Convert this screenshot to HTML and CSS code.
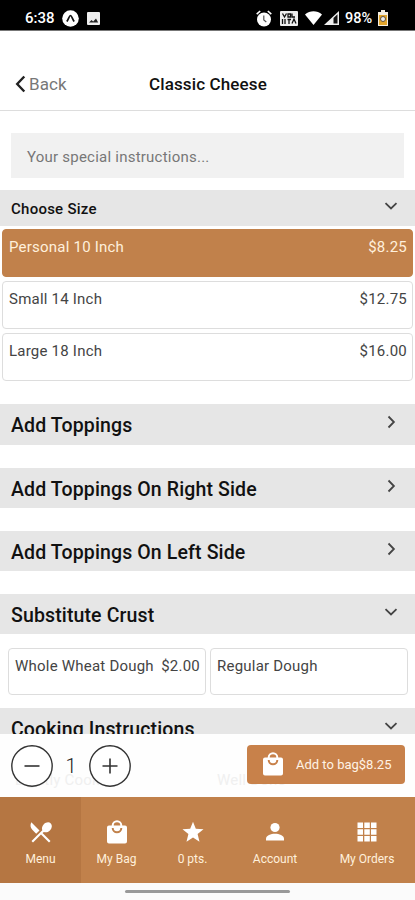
FILE: index.html
```html
<!DOCTYPE html>
<html lang="en">
<head>
<meta charset="utf-8">
<meta name="viewport" content="width=device-width, initial-scale=1">
<title>Classic Cheese</title>
<link rel="stylesheet" href="styles.css">
</head>
<body>
<svg class="defs" width="0" height="0">
  <symbol id="down" viewBox="0 0 14 14"><path d="M1.500 4.200 7 9.500l5.500-5.300" fill="none" stroke="#444" stroke-width="1.800"/></symbol>
  <symbol id="right" viewBox="0 0 14 14"><path d="M4.500 1.500 9.900 7l-5.400 5.500" fill="none" stroke="#444" stroke-width="1.800"/></symbol>
  <symbol id="bag" viewBox="0 0 22 24"><path d="M3 5.500h2.700a5.300 5.300 0 0 1 10.600 0H19a2 2 0 0 1 2 2V21.500a2 2 0 0 1-2 2H3a2 2 0 0 1-2-2V7.500a2 2 0 0 1 2-2zm4.700 0h6.600a3.300 3.300 0 0 0-6.600 0zM5.700 8a5.300 5.300 0 0 0 10.600 0h-2a3.300 3.300 0 0 1-6.600 0z" fill="#fff" fill-rule="evenodd"/></symbol>
</svg>
<div class="phone">
  <div class="status">
    <span class="time">6:38</span>
    <svg class="s-app" width="17" height="17" viewBox="0 0 17 17"><circle cx="8.500" cy="8.500" r="8.300" fill="#fff"/><path d="M4.800 11.500C6.500 9.500 7.300 5.500 8.500 5.500s2 4 3.700 6" fill="none" stroke="#111" stroke-width="1.700"/></svg>
    <svg class="s-pic" width="13" height="13" viewBox="0 0 13 13"><rect width="13" height="13" rx="1" fill="#eee"/><path d="M2 10.500 4.500 8l1.700 1.500L9 6.500l2.200 4z" fill="#222"/></svg>
    <span class="grow"></span>
    <svg class="s-alarm" width="16" height="17" viewBox="0 0 16 17"><circle cx="8" cy="9.500" r="7" fill="#fff"/><path d="M.7 4.200 4.200 1M15.300 4.200 11.800 1" stroke="#fff" stroke-width="1.600"/><path d="M7.800 5.500v4.500l2.500 2" fill="none" stroke="#555" stroke-width="1.200"/></svg>
    <svg class="s-volte" width="18" height="15" viewBox="0 0 18 15"><rect width="18" height="15" rx="1" fill="#eee"/><path d="M2.500 2.500 4.500 6l2-3.500M8 3v3h2.500V3zM12 2.500V6h3M2.500 8v5M5 8v5M7.500 8.500H11M9 8.500V13M12 12.500l2-4.500 2 4.500" fill="none" stroke="#111" stroke-width="1.300"/></svg>
    <svg class="s-wifi" width="17" height="14" viewBox="0 0 17 14"><path d="M0 3.500C5-.9 12-.9 17 3.500L8.500 14z" fill="#fff"/></svg>
    <svg class="s-cell" width="15" height="14" viewBox="0 0 15 14"><path d="M0 14 15 0v14z" fill="#eee"/><path d="M9.500 7v5.500h4V3.300z" fill="#111"/></svg>
    <span class="pct">98%</span>
    <svg class="s-batt" width="10" height="16" viewBox="0 0 10 16"><path d="M3 0h4v2h3v14H0V2h3z" fill="#f5eee0"/><path d="M1 5h8v10H1z" fill="#e3a52b"/><circle cx="5" cy="9" r="2.500" fill="#eee" stroke="#625039"/></svg>
  </div>
  <header class="header">
    <div class="back"><svg width="11" height="18" viewBox="0 0 11 18"><path d="M9.300 1.500 2.200 9l7.100 7.500" fill="none" stroke="#222" stroke-width="2.400"/></svg><span>Back</span></div>
    <h1>Classic Cheese</h1>
  </header>
  <main class="content">
    <div class="note"><span>Your special instructions...</span></div>
    <div class="bar bar-size"><span>Choose Size</span><svg class="chev"><use href="#down"/></svg></div>
    <div class="sizes">
      <div class="option selected"><span>Personal 10 Inch</span><span class="price">$8.25</span></div>
      <div class="option"><span>Small 14 Inch</span><span class="price">$12.75</span></div>
      <div class="option"><span>Large 18 Inch</span><span class="price">$16.00</span></div>
    </div>
    <div class="bar"><span>Add Toppings</span><svg class="chev"><use href="#right"/></svg></div>
    <div class="bar"><span>Add Toppings On Right Side</span><svg class="chev"><use href="#right"/></svg></div>
    <div class="bar"><span>Add Toppings On Left Side</span><svg class="chev"><use href="#right"/></svg></div>
    <div class="bar crust-bar"><span>Substitute Crust</span><svg class="chev"><use href="#down"/></svg></div>
    <div class="crusts">
      <div class="option"><span>Whole Wheat Dough</span><span class="price">$2.00</span></div>
      <div class="option"><span>Regular Dough</span></div>
    </div>
    <div class="bar"><span>Cooking Instructions</span><svg class="chev"><use href="#down"/></svg></div>
  </main>
  <div class="order">
    <div class="under"><span>Lightly Cooked</span><span>Well Done</span></div>
    <div class="qty">
      <svg width="42" height="42" viewBox="0 0 42 42"><circle cx="21" cy="21" r="20.200" fill="#fff" stroke="#333" stroke-width="1.400"/><path d="M13.500 21h15" stroke="#333" stroke-width="1.600"/></svg>
      <span class="count">1</span>
      <svg width="42" height="42" viewBox="0 0 42 42"><circle cx="21" cy="21" r="20.200" fill="#fff" stroke="#333" stroke-width="1.400"/><path d="M13.500 21h15M21 13.500v15" stroke="#333" stroke-width="1.600"/></svg>
    </div>
    <div class="add"><svg width="22" height="24"><use href="#bag"/></svg><span>Add to bag$8.25</span></div>
  </div>
  <nav class="nav">
    <div class="tab active"><svg width="24" height="24" viewBox="0 0 24 24"><path d="M2.300 2.300C1 5 1.300 7.800 3.300 9.800l3.900 3.900 3.300-3.300zM14.900 11.900c1.900.8 4.300.2 6-1.500 2.200-2.200 2.600-5.300.9-7s-4.800-1.300-7 .9c-1.700 1.700-2.300 4.100-1.500 6L2.500 21.100 4 22.600l8-8 8 8 1.500-1.500-8-8z" fill="#fff"/></svg><span>Menu</span></div>
    <div class="tab"><svg width="22" height="24"><use href="#bag"/></svg><span>My Bag</span></div>
    <div class="tab"><svg width="24" height="24" viewBox="0 0 24 24"><path d="m12 1.700 2.800 7.100 7.700.5-5.900 4.800 1.900 7.600-6.500-4.200-6.500 4.200 1.900-7.600L1.500 9.300l7.700-.5z" fill="#fff"/></svg><span>0 pts.</span></div>
    <div class="tab"><svg width="24" height="24" viewBox="0 0 24 24"><circle cx="12" cy="7.500" r="4.600" fill="#fff"/><path d="M3 20.500v-1.800c0-3.200 5-5 9-5s9 1.800 9 5v1.800z" fill="#fff"/></svg><span>Account</span></div>
    <div class="tab"><svg width="24" height="24" viewBox="0 0 24 24"><path d="M2.500 2.500H8V8H2.500zM9.300 2.500h5.500V8H9.300zM16 2.500h5.500V8H16zM2.500 9.300H8v5.500H2.500zM9.300 9.300h5.500v5.500H9.300zM16 9.300h5.500v5.500H16zM2.500 16H8v5.500H2.500zM9.300 16h5.500v5.500H9.300zM16 16h5.500v5.500H16z" fill="#fff"/></svg><span>My Orders</span></div>
  </nav>
  <div class="gesture"><i></i></div>
</div>
</body>
</html>
```
FILE: styles.css
```css
* { box-sizing: border-box; }
body { margin: 0; background: #fff; font-family: Roboto, sans-serif; color: #111; }
.defs { position: absolute; }
svg { display: block; flex: none; }
.phone { width: 415px; height: 900px; display: flex; flex-direction: column; overflow: hidden; }
.status { height: 31px; flex: none; background: #000; border-bottom: 1px solid #777; color: #fff; display: flex; align-items: center; padding: 6px 27px 0 25px; font-size: 15px; font-weight: 500; }
.status svg { margin-left: 8px; }
.time { width: 29px; }
.grow { flex: 1; }
.status .s-wifi { margin-left: 7px; }
.status .s-cell { margin-left: 2px; }
.pct { margin-left: 6px; width: 29px; font-size: 14.5px; }
.status .s-batt { margin-left: 4px; }
.header { height: 80px; flex: none; border-bottom: 1px solid #ddd; display: grid; grid-template-columns: 134px 1fr; align-items: center; padding: 27px 0 0 15px; }
.back { display: flex; align-items: center; gap: 3px; font-size: 17px; color: #777; letter-spacing: .1px; }
h1 { margin: 0; font-size: 17px; font-weight: 500; letter-spacing: .13px; line-height: 23px; }
.content { height: 623px; flex: none; overflow: hidden; }
.note { margin: 22px 11px 12px; height: 45px; background: #f1f1f1; display: flex; align-items: center; padding: 2px 16px 0; color: #777; font-size: 15px; letter-spacing: .23px; }
.bar { height: 40px; margin-bottom: 23px; background: #e6e6e6; display: flex; justify-content: space-between; align-items: center; padding: 2px 17px 0 11px; font-size: 19.5px; font-weight: 500; letter-spacing: .13px; }
.chev { width: 14px; height: 14px; margin-top: -7px; }
.bar-size { height: 36px; margin-bottom: 3px; font-size: 15px; letter-spacing: .25px; }
.sizes { padding: 0 2px; display: grid; gap: 4px; margin-bottom: 24px; }
.option { height: 48px; border: 1px solid #ddd; border-radius: 4px; padding: 8px 5px 0 6px; display: flex; justify-content: space-between; font-size: 15px; line-height: 19px; letter-spacing: .22px; color: #444; white-space: nowrap; }
.selected { background: #c1814b; border-color: #c1814b; color: #fff0dc; }
.crust-bar { margin-bottom: 14px; }
.crusts { display: grid; grid-template-columns: 198px 198px; gap: 4px; padding-left: 8px; margin-bottom: 13px; }
.crusts .option { height: 47px; line-height: 18px; }
.sizes + .bar { margin-top: -1px; height: 41px; }
.order { height: 63px; flex: none; background: #fefefe; position: relative; display: flex; justify-content: space-between; align-items: flex-start; padding: 11px 10px 0 11px; }
.under { position: absolute; left: 15px; top: 37px; display: grid; grid-template-columns: 202px 1fr; font-size: 15px; letter-spacing: .22px; color: #f0f0f0; }
.qty, .add { position: relative; }
.qty { display: flex; align-items: center; }
.count { width: 36px; text-align: center; font-size: 20px; font-weight: 300; color: #222; }
.add { width: 158px; height: 39px; background: #c8814a; border-radius: 4px; display: flex; align-items: center; padding-left: 15px; gap: 12px; color: #fff3e6; font-size: 13px; white-space: nowrap; }
.add svg { margin-top: -1px; }
.nav { height: 86px; flex: none; background: #c1814b; display: grid; grid-template-columns: 81px 71px 81px 84px 100px; }
.tab { display: flex; flex-direction: column; align-items: center; padding-top: 23px; gap: 8px; color: #fff0dc; font-size: 12px; line-height: 15px; white-space: nowrap; }
.active { background: #b57642; }
.gesture { flex: 1; background: #fbfbfb; padding-top: 7px; }
.gesture i { display: block; width: 165px; height: 3px; border-radius: 2px; background: #999; margin: 0 auto; }
```
